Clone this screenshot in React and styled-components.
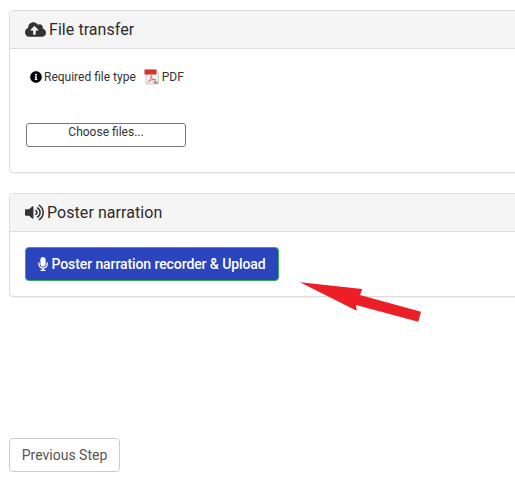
import React from 'react';
import styled, { createGlobalStyle } from 'styled-components';
import { FaCloudUploadAlt, FaVolumeUp, FaMicrophone, FaInfoCircle } from 'react-icons/fa';

const GlobalStyle = createGlobalStyle`
  html, body {
    margin: 0;
    height: 484px;
    overflow: hidden;
    background: #fff;
  }
  body {
    font-family: Roboto, "Liberation Sans", sans-serif;
    color: #333;
  }
`;

const Page = styled.div`
  position: relative;
  width: 515px;
  height: 484px;
  padding: 10px 0 0 9px;
  box-sizing: border-box;
  overflow: hidden;
  display: flex;
  flex-direction: column;
`;

const Panel = styled.section`
  width: 540px;
  height: ${(p) => p.$height}px;
  margin-bottom: 20px;
  box-sizing: border-box;
  background: #fff;
  border: 1px solid #ddd;
  border-radius: 4px;
  box-shadow: 0 1px 1px rgba(0, 0, 0, 0.05);
`;

const PanelHeading = styled.h3`
  display: flex;
  align-items: center;
  gap: 3px;
  height: 38px;
  margin: 0;
  padding: 0 0 0 15px;
  box-sizing: border-box;
  background: #f5f5f5;
  border-bottom: 1px solid #ddd;
  border-radius: 3px 3px 0 0;
  font-size: 16px;
  font-weight: 400;
  letter-spacing: 0.06px;
  color: #2b2b2b;
`;

const PanelBody = styled.div`
  display: flex;
  flex-direction: column;
  align-items: flex-start;
  padding: ${(p) => p.$pad};
`;

const FileType = styled.div`
  display: flex;
  align-items: center;
  height: 16px;
  margin-left: 4px;
  font-size: 12px;
  color: #333;
`;

const InfoIcon = styled(FaInfoCircle)`
  width: 12px;
  height: 12px;
  margin-right: 2px;
  color: #000;
`;

const PdfIcon = styled.svg`
  width: 16px;
  height: 16px;
  margin: 0 2px 0 8px;
`;

const ChooseButton = styled.button`
  width: 160px;
  height: 24px;
  margin-top: 38px;
  padding: 0 0 7px;
  background: #fff;
  border: 1px solid #767676;
  border-radius: 3px;
  font-family: inherit;
  font-size: 12px;
  color: #333;
`;

const RecordButton = styled.button`
  display: flex;
  align-items: center;
  justify-content: center;
  gap: 3px;
  width: 254px;
  height: 34px;
  padding: 0;
  background: #2a45bd;
  border: 1px solid #35ab52;
  border-radius: 4px;
  font-family: inherit;
  font-size: 14px;
  font-weight: 500;
  letter-spacing: -0.09px;
  color: #fff;
`;

const MicIcon = styled(FaMicrophone)`
  width: 10px;
  height: 14px;
`;

const BackButton = styled.button`
  width: 111px;
  height: 34px;
  margin-top: 121px;
  padding: 0;
  background: #fff;
  border: 1px solid #ccc;
  border-radius: 4px;
  font-family: inherit;
  font-size: 14px;
  color: #555;
`;

const Pointer = styled.svg`
  position: absolute;
  left: 295px;
  top: 278px;
  width: 130px;
  height: 48px;
`;

export default function App() {
  return (
    <Page>
      <GlobalStyle />
      <Panel $height={163}>
        <PanelHeading>
          <FaCloudUploadAlt size={21} color="#333" />
          File transfer
        </PanelHeading>
        <PanelBody $pad="20px 16px 0">
          <FileType>
            <InfoIcon />
            Required file type
            <PdfIcon viewBox="0 0 16 16">
              <path d="M2 1h9l3.500 3.500V15H2z" fill="#f1f1f1" stroke="#c9c9c9" strokeWidth="1" />
              <rect x="0.500" y="0.500" width="12" height="5" fill="#d8302a" />
              <path d="M4 13c2-1 4-6 3.500-9M7 8c1 2 3 3 5 3M4 13c2-2 5-3 8-2" fill="none" stroke="#e0655f" strokeWidth="1" />
              <rect x="9.500" y="12.500" width="4" height="2" fill="#8a8a8a" />
            </PdfIcon>
            PDF
          </FileType>
          <ChooseButton>Choose files...</ChooseButton>
        </PanelBody>
      </Panel>
      <Panel $height={104}>
        <PanelHeading>
          <FaVolumeUp size={19} color="#333" />
          Poster narration
        </PanelHeading>
        <PanelBody $pad="15px 15px 0">
          <RecordButton>
            <MicIcon />
            Poster narration recorder &amp; Upload
          </RecordButton>
        </PanelBody>
      </Panel>
      <BackButton>Previous Step</BackButton>
      <Pointer viewBox="295 278 130 48">
        <polygon points="300,282.300 362.300,289 360,295 421,311.700 418.300,321.700 356,305 356.700,310.700" fill="#ec1f27" />
      </Pointer>
    </Page>
  );
}
